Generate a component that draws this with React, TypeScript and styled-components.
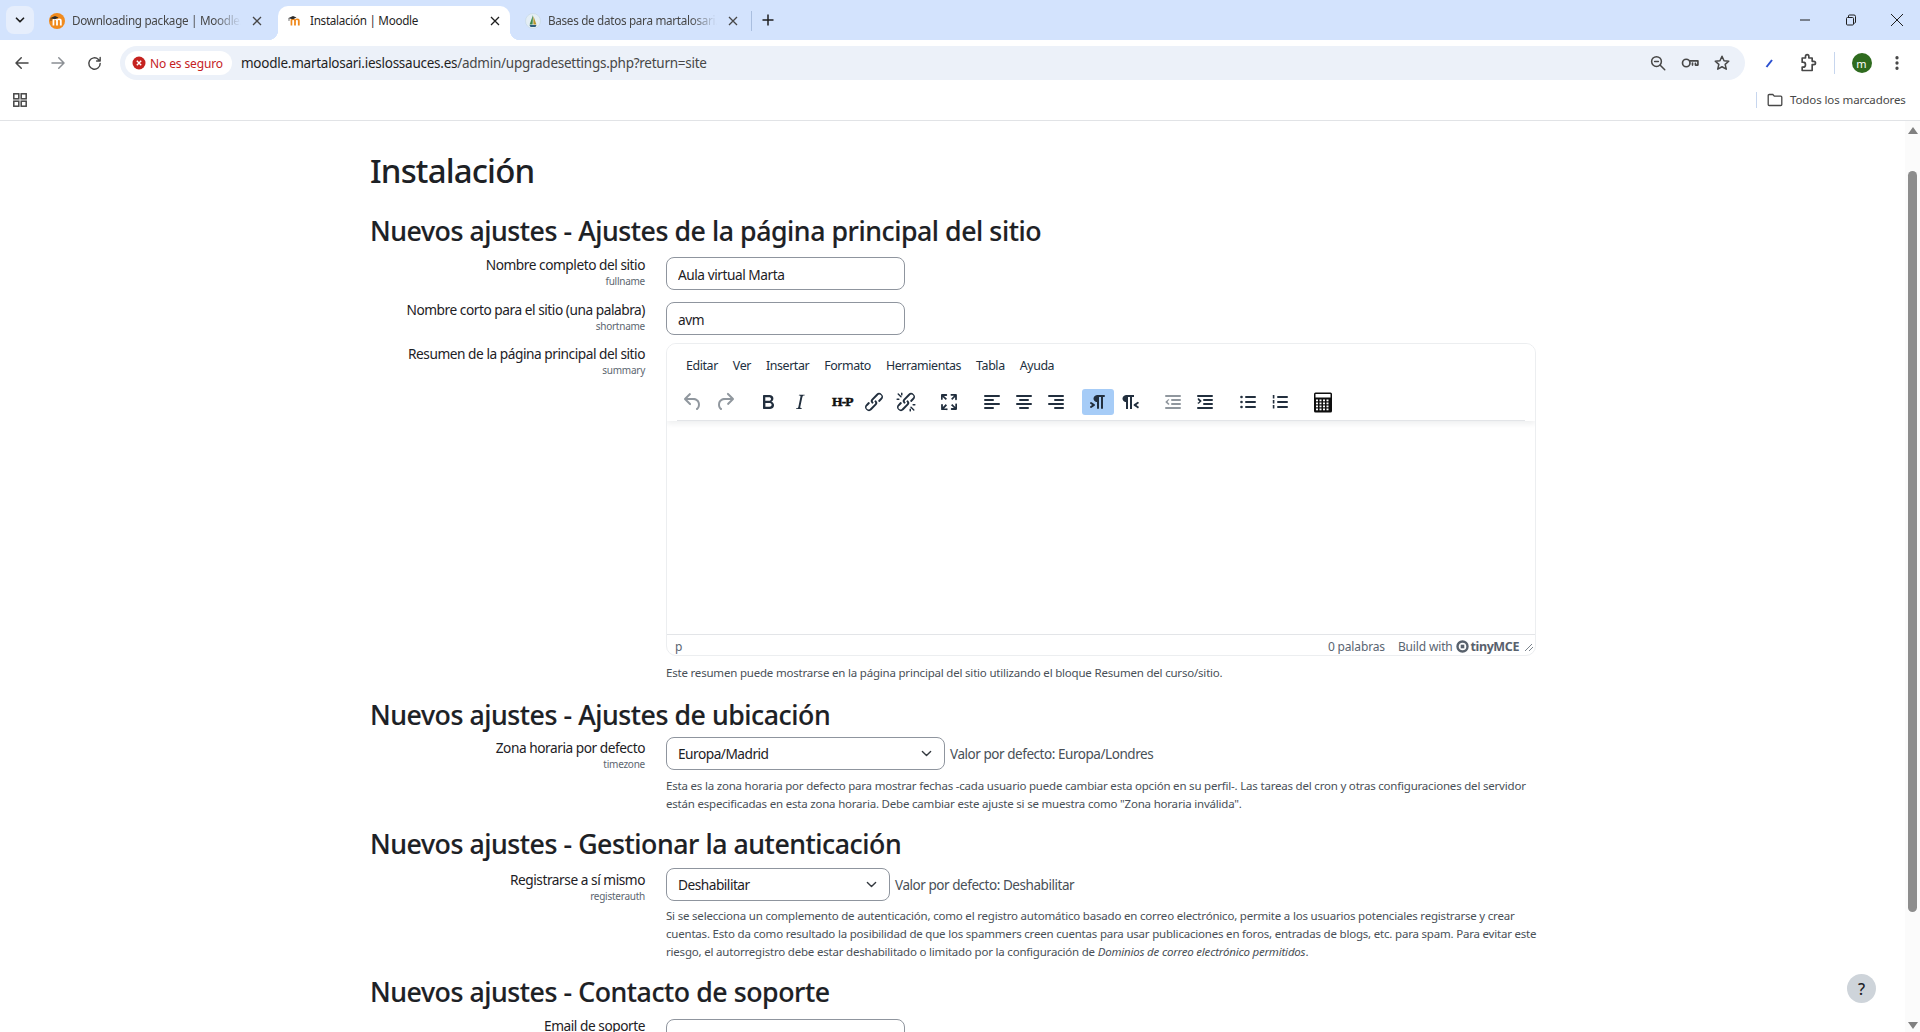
import React from "react";
import styled, { createGlobalStyle } from "styled-components";

const FONT = `"Noto Sans", "Open Sans", "Liberation Sans", sans-serif`;

const Global = createGlobalStyle`
  html, body { margin: 0; padding: 0; height: 1032px; overflow: hidden; background: #fff; }
  body { font-family: ${FONT}; color: #1d2125; }
  * { box-sizing: border-box; }
`;

const Window = styled.div`
  height: 1032px; width: 1920px; display: flex; flex-direction: column; overflow: hidden;
`;

/* ---------- Tab strip ---------- */
const TabStrip = styled.div`
  height: 40px; background: #d3e3fd; display: flex; align-items: flex-start; padding: 6px 0 0 6px; flex: none;
`;
const TabSearch = styled.div`
  width: 28px; height: 28px; border-radius: 8px; background: #e6eefc; display: flex; align-items: center; justify-content: center; margin-right: 6px; color: #1f1f1f;
`;
const Tabs = styled.div`display: flex; gap: 6px;`;
const Tab = styled.div<{ $active?: boolean }>`
  position: relative; width: 232px; height: 34px; display: flex; align-items: center; padding: 0 7px 5px 9px;
  border-radius: 10px 10px 0 0; background: ${p => (p.$active ? "#fff" : "transparent")};
  color: ${p => (p.$active ? "#1f1f1f" : "#474747")};
  ${p => p.$active && `
    &::before, &::after { content: ""; position: absolute; bottom: 0; width: 10px; height: 10px; }
    &::before { left: -10px; background: radial-gradient(circle at 0 0, transparent 10px, #fff 10.5px); }
    &::after { right: -10px; background: radial-gradient(circle at 100% 0, transparent 10px, #fff 10.5px); }
  `}
`;
const Favicon = styled.svg`width: 16px; height: 16px; flex: none; margin-right: 7px;`;
const TabTitle = styled.div<{ $fade?: boolean }>`
  flex: 1; font-size: 11.7px; line-height: 15px; letter-spacing: -0.3px; white-space: nowrap; overflow: hidden; margin-top: -1px;
  ${p => p.$fade && `mask-image: linear-gradient(90deg, #000 84%, transparent 100%); -webkit-mask-image: linear-gradient(90deg, #000 84%, transparent 100%);`}
`;
const TabClose = styled.svg`width: 16px; height: 16px; flex: none; margin-left: 8px;`;
const StripDivider = styled.div`width: 1px; height: 20px; background: #a9bedf; margin: 5px 8px 0 3px;`;
const NewTab = styled.svg`width: 16px; height: 16px; margin-top: 6px;`;
const Spacer = styled.div`flex: 1;`;
const WindowControls = styled.div`display: flex;`;
const WinButton = styled.div`width: 46px; height: 28px; display: flex; align-items: center; justify-content: center; color: #1f1f1f;`;

/* ---------- Address toolbar ---------- */
const Toolbar = styled.div`
  height: 40px; background: #fff; display: flex; align-items: flex-start; padding: 6px 0 0 6px; flex: none;
`;
const NavIcon = styled.div<{ $dim?: boolean }>`
  width: 32px; height: 34px; margin-right: 4px; display: flex; align-items: center; justify-content: center; color: ${p => (p.$dim ? "#8b8f94" : "#474747")};
`;
const Omnibox = styled.div`
  width: 1625px; height: 34px; margin-left: 6px; border-radius: 17px; background: #ecf1f9; display: flex; align-items: center; padding: 0 7px 0 5px; flex: none;
`;
const SecurityChip = styled.div`
  width: 107px; height: 24px; border-radius: 12px; background: #fff; display: flex; align-items: center; padding-left: 7px; gap: 4px; color: #c5221f; font-size: 12px; letter-spacing: -0.12px; flex: none;
`;
const Url = styled.div`
  margin-left: 9px; font-size: 13.5px; letter-spacing: -0.255px; color: #1f1f1f; white-space: nowrap; flex: 1;
  span { color: #474747; }
`;
const OmniActions = styled.div`display: flex; color: #474747;`;
const OmniSlot = styled.div`width: 32px; display: flex; justify-content: center; align-items: center;`;
const ToolActions = styled.div`display: flex; align-items: center; height: 34px;`;
const ToolSlot = styled.div<{ $w: number }>`width: ${p => p.$w}px; display: flex; justify-content: center; align-items: center; color: #474747;`;
const ToolDivider = styled.div`width: 1px; height: 22px; background: #c7d6ee; margin-left: 13px;`;
const Avatar = styled.div`
  width: 20px; height: 20px; border-radius: 50%; background: #2f6b1f; color: #fff; font-size: 11px; display: flex; align-items: center; justify-content: center; line-height: 1;
`;

/* ---------- Bookmarks ---------- */
const Bookmarks = styled.div`
  height: 41px; background: #fff; border-bottom: 1px solid #e1e3e6; display: flex; align-items: center; padding: 0 14px 1px 12px; flex: none;
`;
const AppsIcon = styled.svg`width: 16px; height: 16px; color: #474747;`;
const BookDivider = styled.div`width: 1px; height: 16px; background: #c7d6ee; margin-right: 10px;`;
const FolderIcon = styled.svg`width: 16px; height: 16px; color: #474747; margin-right: 7px;`;
const BookLabel = styled.div`font-size: 11.5px; color: #474747; letter-spacing: -0.1px; width: 116px; white-space: nowrap;`;

/* ---------- Page ---------- */
const Main = styled.div`flex: 1; min-height: 0; display: flex; overflow: hidden;`;
const Content = styled.main`flex: 1; min-width: 0; position: relative; padding: 29px 0 0 370px; overflow: hidden;`;
const Inner = styled.div`width: 1166px;`;
const H1 = styled.h1`
  margin: 0 0 22px; font-size: 33px; line-height: 42px; font-weight: 500; letter-spacing: -0.85px; color: #1d2125;
`;
const H2 = styled.h2<{ $top?: number; $bottom: number }>`
  margin: ${p => p.$top ?? 0}px 0 ${p => p.$bottom}px; font-size: 26.7px; line-height: 34px; font-weight: 500; letter-spacing: -0.44px; color: #1d2125; white-space: nowrap; -webkit-text-stroke: .15px #1d2125;
`;
const Row = styled.div<{ $gap?: number }>`
  display: grid; grid-template-columns: 275px 870px; column-gap: 21px; margin-bottom: ${p => p.$gap ?? 0}px;
`;
const LabelCell = styled.div<{ $shift: number }>`text-align: right; height: 32px; margin-top: ${p => p.$shift}px;`;
const Label = styled.div`font-size: 13.7px; line-height: 18px; color: #1d2125; letter-spacing: -0.46px; white-space: nowrap;`;
const Sub = styled.div`font-size: 10px; line-height: 14px; color: #5c6670; letter-spacing: -0.25px;`;
const TextInput = styled.input`
  display: block; width: 239px; height: 33px; border: 1px solid #8f959e; border-radius: 8px; padding: 2px 11px 0; background: #fff;
  font: 400 13.7px/29px ${FONT}; letter-spacing: -0.46px; color: #1d2125; outline: none;
`;
const chevron = `url("data:image/svg+xml,%3Csvg xmlns='http://www.w3.org/2000/svg' viewBox='0 0 16 16'%3E%3Cpath fill='none' stroke='%23343a40' stroke-linecap='round' stroke-linejoin='round' stroke-width='2' d='M2 5l6 6 6-6'/%3E%3C/svg%3E")`;
const Select = styled.select<{ $w: number }>`
  appearance: none; width: ${p => p.$w}px; height: 33px; border: 1px solid #8f959e; border-radius: 8px; padding: 0 30px 0 11px; background: #fff ${chevron} no-repeat right 12px center / 11px 11px;
  font: 400 13.7px ${FONT}; letter-spacing: -0.5px; color: #1d2125; outline: none; flex: none;
`;
const FieldLine = styled.div`display: flex; align-items: center; gap: 5px;`;
const DefaultValue = styled.span`font-size: 13.5px; letter-spacing: -0.45px; color: #495057; white-space: nowrap;`;
const Help = styled.div<{ $top: number }>`
  font-size: 11.5px; line-height: 18px; color: #495057; margin-top: ${p => p.$top}px; letter-spacing: -0.2px; width: 876px;
  em { font-style: italic; }
`;

/* ---------- Editor ---------- */
const Editor = styled.div`
  height: 313px; width: 870px; border: 1px solid #eceef0; border-radius: 10px; display: flex; flex-direction: column; overflow: hidden; background: #fff;
`;
const EditorHead = styled.div`
  height: 77px; flex: none; padding: 0 10px; box-shadow: 0 3px 5px rgba(34,47,62,.07); position: relative; z-index: 1; background: #fff;
`;
const Menubar = styled.div`height: 43px; display: flex; align-items: center; padding-left: 9px; gap: 15px;`;
const MenuItem = styled.div`font-size: 12.4px; color: #222f3e; letter-spacing: -0.4px;`;
const IconBar = styled.div`
  height: 34px; display: flex; align-items: center; gap: 10.7px; border-bottom: 1px solid #e3e5e8; padding: 1px 0 4px;
`;
const IconGroup = styled.div`display: flex;`;
const IconBtn = styled.div<{ $on?: boolean; $off?: boolean }>`
  width: 32px; height: 26px; display: flex; align-items: center; justify-content: center; border-radius: 3px;
  background: ${p => (p.$on ? "#a6ccf7" : "transparent")}; color: ${p => (p.$off ? "rgba(34,47,62,.5)" : "#222f3e")};
`;
const H5P = styled.span`font: 700 13.5px "Liberation Serif", serif; letter-spacing: -0.9px; color: #111; -webkit-text-stroke: .5px #111;`;
const EditorBody = styled.div`flex: 1;`;
const StatusBar = styled.div`
  height: 21px; flex: none; border-top: 1px solid #e3e5e8; display: flex; align-items: center; padding: 3px 0 0 8px; font-size: 12px; color: #5a6572; letter-spacing: -0.15px;
`;
const WordCount = styled.span`margin-right: 13px;`;
const Brand = styled.span`display: flex; align-items: center; margin-right: 4px;`;
const BrandName = styled.span`font: 700 12.5px ${FONT}; color: #58616c; letter-spacing: -0.4px; margin-left: 2px;`;

/* ---------- Scrollbar & help ---------- */
const Scrollbar = styled.div`
  width: 15px; flex: none; background: #fbfbfb; display: flex; flex-direction: column; align-items: center; padding: 6px 0 3px;
`;
const Arrow = styled.div<{ $down?: boolean }>`
  width: 0; height: 0; flex: none; border-left: 5px solid transparent; border-right: 5px solid transparent;
  ${p => (p.$down ? "border-top: 7px solid #808080;" : "border-bottom: 7px solid #808080;")}
`;
const Thumb = styled.div`width: 9px; height: 741px; margin-top: 37px; border-radius: 5px; background: #8d8d8d; flex: none;`;
const HelpButton = styled.div`
  position: absolute; left: 1847px; top: 853px; width: 29px; height: 29px; border-radius: 50%; background: #ced4da; color: #1d2125; display: flex; align-items: center; justify-content: center; font-size: 16px; font-weight: 500;
`;

/* ---------- Icons ---------- */
const MoodleM = ({ c }: { c: string }) => (
  <path d="M3.6 12.6V7.4C3.6 6 4.6 5.4 6 5.4c1 0 1.6.4 2 1 .6-.7 1.3-1 2.3-1 1.5 0 2.4.8 2.4 2.2v5h-1.8V8c0-.7-.3-1.1-1-1.1s-1 .4-1 1.1v4.6H7.1V8c0-.7-.3-1.1-1-1.1S5.300 7.300 5.300 8v4.600H3.600Z" fill={c} />
);
const Moodle = ({ round }: { round?: boolean }) => (
  <Favicon viewBox="0 0 16 16">
    {round && <circle cx="8" cy="8" r="8" fill="#f08a1d" />}
    <MoodleM c={round ? "#fff" : "#f08a1d"} />
    <path d="M1 5.200 6 3l3.500 1.500-3.500 1.700Z" fill="#2b2b2b" />
    <path d="M2 5.500v2.400" stroke="#2b2b2b" strokeWidth=".7" />
  </Favicon>
);
const Sail = () => (
  <Favicon viewBox="0 0 16 16">
    <circle cx="8" cy="8" r="7.500" fill="#e4eef5" stroke="#c5d6e0" strokeWidth=".6" />
    <path d="M8 2 4.600 11.500h3Z" fill="#3d8a4e" />
    <path d="M8.400 3 11.400 11.500H8.400Z" fill="#b8952a" />
    <path d="M4.500 12h7l-1 2h-5Z" fill="#2f5d7c" />
  </Favicon>
);
const CloseX = () => (
  <TabClose viewBox="0 0 16 16"><path d="M4 4l8 8M12 4l-8 8" stroke="currentColor" strokeWidth="1.300" fill="none" /></TabClose>
);
const S = ({ size = 16, children }: { size?: number; children: React.ReactNode }) => (
  <svg width={size} height={size} viewBox="0 0 24 24" fill="none" stroke="currentColor" strokeWidth="2" strokeLinecap="round" strokeLinejoin="round">{children}</svg>
);
const T = ({ d, w = 24, h = 24 }: { d: string; w?: number; h?: number }) => (
  <svg width={w} height={h} viewBox="0 0 24 24" fill="currentColor"><path d={d} /></svg>
);
const Lines = ({ rows }: { rows: [number, number, number][] }) => (
  <svg width="24" height="24" viewBox="0 0 24 24" fill="currentColor">
    {rows.map(([x, y, w], i) => <rect key={i} x={x} y={y} width={w} height="2" rx="1" />)}
  </svg>
);

const undo = "M6.4 8H12c3.7 0 6.200 2 6.800 5.100.6 2.700-.4 5.600-2.300 6.800a1 1 0 0 1-1-1.800c1.100-.6 1.800-2.700 1.400-4.600-.5-2.100-2.100-3.500-4.900-3.500H6.400l3.300 3.300a1 1 0 1 1-1.400 1.400l-5-5a1 1 0 0 1 0-1.400l5-5a1 1 0 0 1 1.400 1.400L6.400 8Z";
const redo = "M17.600 10H12c-2.800 0-4.400 1.400-4.900 3.500-.4 2 .3 4 1.400 4.600a1 1 0 1 1-1 1.800c-2-1.200-2.900-4.100-2.300-6.800.6-3 3-5.100 6.800-5.100h5.600l-3.300-3.300a1 1 0 1 1 1.400-1.400l5 5a1 1 0 0 1 0 1.400l-5 5a1 1 0 0 1-1.400-1.400l3.300-3.300Z";
const bold = "M7.800 19c-.3 0-.5 0-.6-.2l-.2-.5V5.700c0-.2 0-.4.2-.5l.6-.2h5c1.500 0 2.700.3 3.500 1 .7.6 1.100 1.400 1.100 2.500a3 3 0 0 1-.6 1.900c-.4.6-1 1-1.600 1.200.4.1.9.3 1.300.6s.8.7 1 1.200c.4.4.5 1 .5 1.600 0 1.300-.4 2.300-1.300 3-.8.7-2.100 1-3.800 1H7.800Zm5-8.300c.6 0 1.200-.1 1.600-.5.4-.3.6-.7.6-1.300 0-1.100-.8-1.700-2.300-1.700H9.300v3.500h3.500Zm.5 6c.7 0 1.300-.1 1.700-.4.4-.4.6-.9.6-1.500s-.2-1-.7-1.400c-.4-.3-1-.4-2-.4H9.400v3.700h3.900Z";
const italic = "M16.700 4.700l-.1.900h-.3c-.6 0-1 0-1.400.3-.3.3-.4.6-.5 1.100l-2.100 9.800v.6c0 .5.4.8 1.400.8h.2l-.2.8H8l.2-.8h.2c1.100 0 1.800-.5 2-1.500l2-9.800.1-.5c0-.6-.4-.8-1.400-.8h-.3l.2-.9h5.800Z";
const link = "M6.200 12.300a1 1 0 0 1 1.400 1.400l-2 2a2 2 0 1 0 2.600 2.800l4.800-4.800a1 1 0 0 0 0-1.400 1 1 0 1 1 1.400-1.300 2.900 2.900 0 0 1 0 4L9.600 20a3.900 3.900 0 0 1-5.500-5.500l2-2.200Zm11.600-.6a1 1 0 0 1-1.400-1.400l2-2a2 2 0 1 0-2.600-2.800L11 10.300a1 1 0 0 0 0 1.400A1 1 0 1 1 9.600 13a2.900 2.900 0 0 1 0-4L14.400 4a3.900 3.900 0 0 1 5.500 5.500l-2.100 2.200Z";
const unlinkRays = "M7.500 6.300a.7.7 0 0 1-1 1L3.700 4.500a.7.7 0 0 1 1-1l2.800 2.800ZM5 8.500a.8.8 0 0 1 0 1.500H3a.8.8 0 0 1 0-1.500h2Zm3.500-3.500a.8.8 0 0 1-1.500 0V3a.8.8 0 0 1 1.500 0v2Zm8 12.700a.7.7 0 0 1 1-1l2.800 2.800a.7.7 0 0 1-1 1l-2.800-2.800Zm2.500-2.200a.8.8 0 0 1 0-1.500h2a.8.8 0 0 1 0 1.500h-2Zm-3.500 3.500a.8.8 0 0 1 1.500 0v2a.8.8 0 0 1-1.500 0v-2Z";
const fullscreen = "m15.300 10-1.200-1.300 2.900-3h-2.300a.9.9 0 1 1 0-1.700H19c.5 0 .9.4.9.9v4.400a.9.9 0 1 1-1.800 0V7l-2.800 3Zm0 4 3 3v-2.300a.9.9 0 1 1 1.700 0V19c0 .5-.4.9-.9.9h-4.400a.9.9 0 1 1 0-1.800H17l-3-2.900 1.300-1.200ZM10 15.400l-2.900 3h2.300a.9.9 0 1 1 0 1.700H5a.9.9 0 0 1-.9-.9v-4.400a.9.9 0 1 1 1.800 0V17l2.900-3 1.200 1.400ZM8.700 10 5.700 7v2.300a.9.9 0 0 1-1.700 0V5c0-.5.4-.9.9-.9h4.400a.9.9 0 0 1 0 1.800H7l3 2.900-1.300 1.200Z";
const ltr = "M11 5h7a1 1 0 0 1 0 2h-1v11a1 1 0 0 1-2 0V7h-2v11a1 1 0 0 1-2 0v-6c-.5 0-1 0-1.400-.3A3.400 3.400 0 0 1 7.800 10a3.300 3.300 0 0 1 0-2.800 3.400 3.400 0 0 1 1.800-1.800L11 5ZM4.400 16.200 6.200 15l-1.800-1.200a1 1 0 0 1 1.200-1.600l3 2a1 1 0 0 1 0 1.600l-3 2a1 1 0 1 1-1.200-1.600Z";
const rtl = "M8 5h8v2h-2v12h-2V7h-2v12H8v-7c-.5 0-1 0-1.400-.3A3.400 3.400 0 0 1 4.800 10a3.300 3.300 0 0 1 0-2.800 3.400 3.400 0 0 1 1.800-1.800L8 5Zm12 11.200a1 1 0 1 1-1 1.600l-3-2a1 1 0 0 1 0-1.600l3-2a1 1 0 1 1 1 1.600L18.400 15l1.600 1.200Z";

const TableCalc = () => (
  <svg width="20" height="21" viewBox="0 0 20 21">
    <rect x="1" y="0.500" width="18" height="20" rx="1.500" fill="#0e0e0e" />
    <rect x="2.500" y="2" width="15" height="3.500" fill="#fff" />
    {[7.500, 10.500, 13.500, 16.500].map(y => [3, 6.500, 10, 13.500].map(x => <rect key={`${x}-${y}`} x={x} y={y} width="2" height="1.800" fill="#fff" />))}
  </svg>
);
const Bullets = () => (
  <svg width="24" height="24" viewBox="0 0 24 24" fill="currentColor">
    {[6, 11, 16].map(y => <React.Fragment key={y}><circle cx="5.500" cy={y + 1} r="1.300" /><rect x="9" y={y} width="11" height="2" rx="1" /></React.Fragment>)}
  </svg>
);
const Numbers = () => (
  <svg width="24" height="24" viewBox="0 0 24 24" fill="currentColor">
    {[6, 11, 16].map(y => <React.Fragment key={y}><rect x="4.800" y={y - 1} width="1.600" height="3.600" rx=".4" /><rect x="9" y={y} width="11" height="2" rx="1" /></React.Fragment>)}
  </svg>
);

export default function App() {
  return (
    <Window>
      <Global />
      <TabStrip>
        <TabSearch><S size={14}><path d="M6 9l6 6 6-6" strokeWidth="3" /></S></TabSearch>
        <Tabs>
          <Tab><Moodle round /><TabTitle $fade>Downloading package | Moodle.org</TabTitle><CloseX /></Tab>
          <Tab $active><Moodle /><TabTitle>Instalación | Moodle</TabTitle><CloseX /></Tab>
          <Tab><Sail /><TabTitle $fade>Bases de datos para martalosari.ieslossauces</TabTitle><CloseX /></Tab>
        </Tabs>
        <StripDivider />
        <NewTab viewBox="0 0 16 16"><path d="M8 2.500v11M2.500 8h11" stroke="#1f1f1f" strokeWidth="1.500" /></NewTab>
        <Spacer />
        <WindowControls>
          <WinButton><svg width="12" height="12" viewBox="0 0 12 12"><path d="M1 6h10" stroke="currentColor" /></svg></WinButton>
          <WinButton><svg width="12" height="12" viewBox="0 0 12 12" fill="none" stroke="currentColor"><rect x="1.500" y="3.500" width="7" height="7.500" rx="1" /><path d="M3.500 3.500V2a1 1 0 0 1 1-1h4.500a1.500 1.500 0 0 1 1.500 1.500V8a1 1 0 0 1-1.500 1" /></svg></WinButton>
          <WinButton><svg width="14" height="14" viewBox="0 0 14 14"><path d="M1 1l12 12M13 1L1 13" stroke="currentColor" /></svg></WinButton>
        </WindowControls>
      </TabStrip>

      <Toolbar>
        <NavIcon><S size={18}><path d="M20 12H5M11 5l-7 7 7 7" /></S></NavIcon>
        <NavIcon $dim><S size={18}><path d="M4 12h15M13 5l7 7-7 7" /></S></NavIcon>
        <NavIcon><S size={17}><path d="M20 12a8 8 0 1 1-2.400-5.700L20 8.500M20 3.500v5h-5" /></S></NavIcon>
        <Omnibox>
          <SecurityChip>
            <svg width="14" height="14" viewBox="0 0 14 14"><circle cx="7" cy="7" r="6.500" fill="#c5221f" /><path d="M4.800 4.800l4.400 4.400M9.200 4.800L4.800 9.200" stroke="#fff" strokeWidth="1.400" /></svg>
            No es seguro
          </SecurityChip>
          <Url>moodle.martalosari.ieslossauces.es<span>/admin/upgradesettings.php?return=site</span></Url>
          <OmniActions>
            <OmniSlot><S size={18}><circle cx="10" cy="10" r="6.500" /><path d="M15 15l6 6M7.500 10h5" /></S></OmniSlot>
            <OmniSlot><S size={20}><circle cx="7.500" cy="12" r="4.500" /><path d="M12 9.500h9.500v5h-3v-2M15 12v2.500" /></S></OmniSlot>
            <OmniSlot><S size={18}><path d="M12 3l2.700 6 6.300.6-4.800 4.200 1.500 6.400L12 17l-5.700 3.200 1.500-6.400L3 9.600 9.300 9Z" /></S></OmniSlot>
          </OmniActions>
        </Omnibox>
        <ToolActions>
          <ToolSlot $w={49}><svg width="9" height="9" viewBox="0 0 9 9"><path d="M1.500 8L7 1" stroke="#2a4fd0" strokeWidth="2" /></svg></ToolSlot>
          <ToolSlot $w={27}><S size={20}><path d="M6 5h4V3a2 2 0 0 1 4 0v2h4v4h2a2 2 0 0 1 0 4h-2v7H6v-4h1a2 2 0 0 0 0-6H6Z" transform="translate(-1 1)" /></S></ToolSlot>
          <ToolDivider />
          <ToolSlot $w={53}><Avatar>m</Avatar></ToolSlot>
          <ToolSlot $w={18}><S size={18}><circle cx="12" cy="5" r="1.200" fill="currentColor" /><circle cx="12" cy="12" r="1.200" fill="currentColor" /><circle cx="12" cy="19" r="1.200" fill="currentColor" /></S></ToolSlot>
        </ToolActions>
      </Toolbar>

      <Bookmarks>
        <AppsIcon viewBox="0 0 16 16" fill="none" stroke="currentColor" strokeWidth="1.500">
          <rect x="1.800" y="1.800" width="5" height="5" /><rect x="9.200" y="1.800" width="5" height="5" />
          <rect x="1.800" y="9.200" width="5" height="5" /><rect x="9.200" y="9.200" width="5" height="5" />
        </AppsIcon>
        <Spacer />
        <BookDivider />
        <FolderIcon viewBox="0 0 16 16" fill="none" stroke="currentColor" strokeWidth="1.300"><path d="M1.200 3.500a1 1 0 0 1 1-1h3.600l1.500 1.700h6.500a1 1 0 0 1 1 1v7.300a1 1 0 0 1-1 1H2.200a1 1 0 0 1-1-1Z" /></FolderIcon>
        <BookLabel>Todos los marcadores</BookLabel>
      </Bookmarks>

      <Main>
        <Content>
          <Inner>
            <H1>Instalación</H1>
            <H2 $bottom={9}>Nuevos ajustes - Ajustes de la página principal del sitio</H2>
            <Row $gap={12}>
              <LabelCell $shift={-1}><Label>Nombre completo del sitio</Label><Sub>fullname</Sub></LabelCell>
              <TextInput readOnly value="Aula virtual Marta" />
            </Row>
            <Row $gap={8}>
              <LabelCell $shift={-1}><Label>Nombre corto para el sitio (una palabra)</Label><Sub>shortname</Sub></LabelCell>
              <TextInput readOnly value="avm" />
            </Row>
            <Row>
              <LabelCell $shift={2}><Label>Resumen de la página principal del sitio</Label><Sub>summary</Sub></LabelCell>
              <div>
                <Editor>
                  <EditorHead>
                    <Menubar>
                      {["Editar", "Ver", "Insertar", "Formato", "Herramientas", "Tabla", "Ayuda"].map(m => <MenuItem key={m}>{m}</MenuItem>)}
                    </Menubar>
                    <IconBar>
                      <IconGroup>
                        <IconBtn $off><T d={undo} /></IconBtn>
                        <IconBtn $off><T d={redo} /></IconBtn>
                      </IconGroup>
                      <IconGroup>
                        <IconBtn><T d={bold} /></IconBtn>
                        <IconBtn><T d={italic} /></IconBtn>
                      </IconGroup>
                      <IconGroup>
                        <IconBtn><H5P>H-P</H5P></IconBtn>
                        <IconBtn><T d={link} /></IconBtn>
                        <IconBtn><T d={link + unlinkRays} /></IconBtn>
                      </IconGroup>
                      <IconGroup><IconBtn><T d={fullscreen} /></IconBtn></IconGroup>
                      <IconGroup>
                        <IconBtn><Lines rows={[[4, 5, 16], [4, 9, 10], [4, 13, 16], [4, 17, 10]]} /></IconBtn>
                        <IconBtn><Lines rows={[[4, 5, 16], [7, 9, 10], [4, 13, 16], [7, 17, 10]]} /></IconBtn>
                        <IconBtn><Lines rows={[[4, 5, 16], [10, 9, 10], [4, 13, 16], [10, 17, 10]]} /></IconBtn>
                      </IconGroup>
                      <IconGroup>
                        <IconBtn $on><T d={ltr} /></IconBtn>
                        <IconBtn><T d={rtl} /></IconBtn>
                      </IconGroup>
                      <IconGroup>
                        <IconBtn $off><T d="M5 5h14a1 1 0 0 1 0 2H5a1 1 0 1 1 0-2Zm6 4h8a1 1 0 0 1 0 2h-8a1 1 0 0 1 0-2Zm0 4h8a1 1 0 0 1 0 2h-8a1 1 0 0 1 0-2Zm-6 4h14a1 1 0 0 1 0 2H5a1 1 0 0 1 0-2Zm3.200-7.500L6.500 12l1.700 1.500a.8.8 0 0 1-1 1.200l-2.500-2.100a.8.8 0 0 1 0-1.200l2.500-2.100a.8.8 0 0 1 1 1.200Z" /></IconBtn>
                        <IconBtn><T d="M5 5h14a1 1 0 0 1 0 2H5a1 1 0 1 1 0-2Zm6 4h8a1 1 0 0 1 0 2h-8a1 1 0 0 1 0-2Zm0 4h8a1 1 0 0 1 0 2h-8a1 1 0 0 1 0-2Zm-6 4h14a1 1 0 0 1 0 2H5a1 1 0 0 1 0-2Zm-.200-7.500a.8.8 0 0 1 1-1.200l2.500 2.100a.8.8 0 0 1 0 1.200l-2.500 2.100a.8.8 0 0 1-1-1.200L6.500 12Z" /></IconBtn>
                      </IconGroup>
                      <IconGroup>
                        <IconBtn><Bullets /></IconBtn>
                        <IconBtn><Numbers /></IconBtn>
                      </IconGroup>
                      <IconGroup><IconBtn><TableCalc /></IconBtn></IconGroup>
                    </IconBar>
                  </EditorHead>
                  <EditorBody />
                  <StatusBar>
                    <span>p</span>
                    <Spacer />
                    <WordCount>0 palabras</WordCount>
                    <Brand>Build with&nbsp;
                      <svg width="13" height="13" viewBox="0 0 13 13"><circle cx="6.500" cy="6.500" r="5" fill="none" stroke="#58616c" strokeWidth="2.400" /><rect x="4.700" y="4.700" width="3.600" height="3.600" fill="#58616c" /></svg>
                      <BrandName>tinyMCE</BrandName>
                    </Brand>
                    <svg width="12" height="12" viewBox="0 0 12 12"><path d="M2 10l7-7M6 10l4-4" stroke="#7a838c" strokeWidth="1" /></svg>
                  </StatusBar>
                </Editor>
                <Help $top={8}>Este resumen puede mostrarse en la página principal del sitio utilizando el bloque Resumen del curso/sitio.</Help>
              </div>
            </Row>

            <H2 $top={16} $bottom={5}>Nuevos ajustes - Ajustes de ubicación</H2>
            <Row>
              <LabelCell $shift={2}><Label>Zona horaria por defecto</Label><Sub>timezone</Sub></LabelCell>
              <div>
                <FieldLine><Select $w={279} defaultValue="m"><option value="m">Europa/Madrid</option></Select><DefaultValue>Valor por defecto: Europa/Londres</DefaultValue></FieldLine>
                <Help $top={7}>Esta es la zona horaria por defecto para mostrar fechas -cada usuario puede cambiar esta opción en su perfil-. Las tareas del cron y otras configuraciones del servidor están especificadas en esta zona horaria. Debe cambiar este ajuste si se muestra como "Zona horaria inválida".</Help>
              </div>
            </Row>

            <H2 $top={14} $bottom={7}>Nuevos ajustes - Gestionar la autenticación</H2>
            <Row>
              <LabelCell $shift={3}><Label>Registrarse a sí mismo</Label><Sub>registerauth</Sub></LabelCell>
              <div>
                <FieldLine><Select $w={224} defaultValue="d"><option value="d">Deshabilitar</option></Select><DefaultValue>Valor por defecto: Deshabilitar</DefaultValue></FieldLine>
                <Help $top={6}>Si se selecciona un complemento de autenticación, como el registro automático basado en correo electrónico, permite a los usuarios potenciales registrarse y crear cuentas. Esto da como resultado la posibilidad de que los spammers creen cuentas para usar publicaciones en foros, entradas de blogs, etc. para spam. Para evitar este riesgo, el autorregistro debe estar deshabilitado o limitado por la configuración de <em>Dominios de correo electrónico permitidos</em>.</Help>
              </div>
            </Row>

            <H2 $top={14} $bottom={10}>Nuevos ajustes - Contacto de soporte</H2>
            <Row>
              <LabelCell $shift={-2}><Label>Email de soporte</Label></LabelCell>
              <TextInput readOnly value="" />
            </Row>
          </Inner>
          <HelpButton>?</HelpButton>
        </Content>
        <Scrollbar>
          <Arrow />
          <Thumb />
          <Spacer />
          <Arrow $down />
        </Scrollbar>
      </Main>
    </Window>
  );
}
